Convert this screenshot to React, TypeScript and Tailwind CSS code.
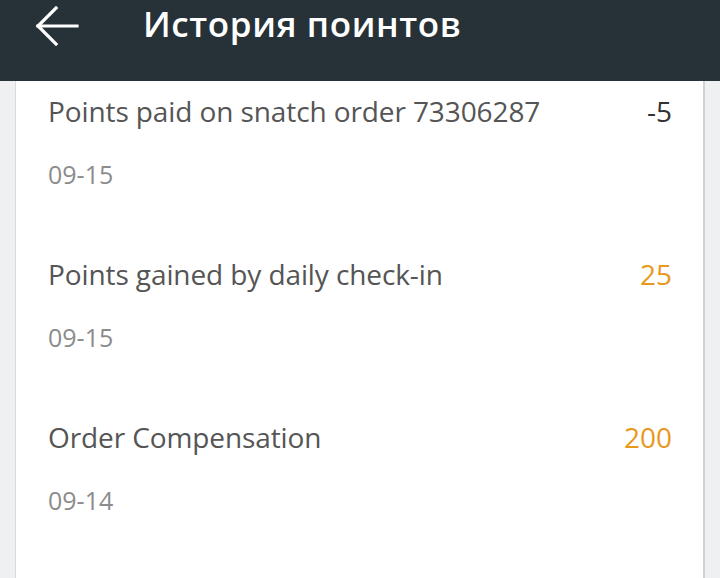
import React from "react";

const rows = [
  { title: "Points paid on snatch order 73306287", date: "09-15", value: "-5", orange: false },
  { title: "Points gained by daily check-in", date: "09-15", value: "25", orange: true },
  { title: "Order Compensation", date: "09-14", value: "200", orange: true },
];

export default function App() {
  return (
    <div className="w-[720px] h-[578px] overflow-hidden bg-[#eef0f1] flex flex-col" style={{ fontFamily: '"Open Sans", sans-serif' }}>
      <header className="h-[81px] shrink-0 bg-[#263238] flex items-start">
        <div className="ml-[35px] mt-[6px] w-[46px] h-[40px] flex items-center">
          <svg width="46" height="40" viewBox="0 0 46 40" fill="none" stroke="white" strokeWidth="3.2" strokeLinecap="square">
            <path d="M3 20 H42" />
            <path d="M21 2 L3 20 L21 38" strokeLinejoin="miter" />
          </svg>
        </div>
        <h1 className="ml-[62px] mt-[2px] text-[35px] leading-[44px] font-semibold text-white tracking-[0.6px]">История поинтов</h1>
      </header>
      <div className="flex-1 mx-[15px] bg-white border-l border-l-[#d9dcdf] border-r-2 border-r-[#d0d3d6] pt-[16px] px-[32px]">
        {rows.map((r, i) => (
          <div key={i} className="pb-[73px]">
            <div className="flex justify-between items-start">
              <span className="text-[28px] leading-[28px] text-[#555555] tracking-[-0.1px]">{r.title}</span>
              <span className={"mr-[-1px] text-[28px] leading-[28px] " + (r.orange ? "text-[#e8991c]" : "text-[#333333]")}>{r.value}</span>
            </div>
            <div className="mt-[37px] text-[25px] leading-[25px] text-[#8c8c8c]">{r.date}</div>
          </div>
        ))}
      </div>
    </div>
  );
}
